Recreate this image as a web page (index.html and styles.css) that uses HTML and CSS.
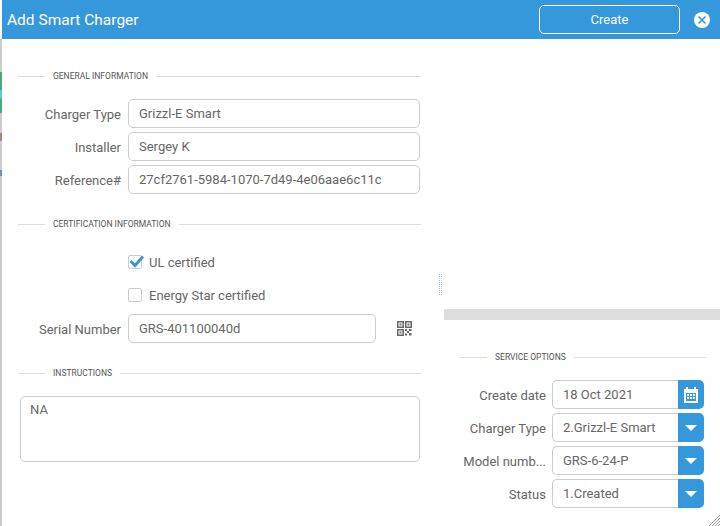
FILE: index.html
```html
<!DOCTYPE html>
<html lang="en">
  <head>
    <meta charset="UTF-8" />
    <meta name="viewport" content="width=device-width, initial-scale=1.0" />
    <title>Add Smart Charger</title>
    <link rel="stylesheet" href="styles.css">
  </head>
  <body>
    <div class="strip"></div>
    <div class="dialog">
      <header class="topbar">
        <span class="topbar-title">Add Smart Charger</span>
        <button class="create-btn">Create</button>
        <span class="close-btn">
          <svg width="10" height="10" viewBox="0 0 10 10"><path d="M1.500 1.500l7 7M8.500 1.500l-7 7" stroke="#3498db" stroke-width="1.600" fill="none"/></svg>
        </span>
      </header>

      <div class="panes">
        <section class="pane-left">
          <div class="group-title general"><span>GENERAL INFORMATION</span></div>
          <div class="rows">
            <div class="row"><label>Charger Type</label><div class="field">Grizzl-E Smart</div></div>
            <div class="row"><label>Installer</label><div class="field">Sergey K</div></div>
            <div class="row"><label>Reference#</label><div class="field">27cf2761-5984-1070-7d49-4e06aae6c11c</div></div>
          </div>

          <div class="group-title cert"><span>CERTIFICATION INFORMATION</span></div>
          <div class="check-row first">
            <span class="check">
              <svg width="18" height="16" viewBox="0 0 18 16"><path d="M2.500 8l4.500 4.500 8-9" stroke="#3498db" stroke-width="3" fill="none"/></svg>
            </span>
            UL certified
          </div>
          <div class="check-row second"><span class="check"></span>Energy Star certified</div>
          <div class="row serial">
            <label>Serial Number</label>
            <div class="field">GRS-401100040d</div>
            <svg class="qr" width="15" height="15" viewBox="0 0 15 15">
              <path d="M.8.8h5.400v5.400h-5.400zM8.800.8h5.400v5.400h-5.400zM.8 8.800h5.400v5.400h-5.400z" fill="none" stroke="#666" stroke-width="1.500"/>
              <path d="M2.500 2.500h2v2h-2zM10.500 2.500h2v2h-2zM2.500 10.500h2v2h-2z" fill="#7d7768"/>
              <path d="M8 8h2v2h-2zM12 8h2.500v2h-2.500zM10 10h2v2h-2zM8 12.500h2v2h-2zM12 12h2.500v2.500h-2.500z" fill="#666"/>
            </svg>
          </div>

          <div class="group-title instr"><span>INSTRUCTIONS</span></div>
          <div class="notes">NA</div>
        </section>

        <div class="splitter"><span class="grip"></span></div>

        <section class="pane-right">
          <div class="blank"></div>
          <div class="hbar"></div>
          <div class="group-title service"><span>SERVICE OPTIONS</span></div>
          <div class="rows small">
            <div class="row">
              <label>Create date</label>
              <div class="field joined">18 Oct 2021</div>
              <span class="addon">
                <svg width="16" height="18" viewBox="0 0 16 18">
                  <path d="M1 3h14v14h-14z" fill="#fff"/>
                  <path d="M3 1h2v3h-2zM11 1h2v3h-2z" fill="#fff"/>
                  <path d="M3 7h10v8h-10z" fill="#3498db"/>
                  <path d="M4 8h2v2h-2zM7 8h2v2h-2zM10 8h2v2h-2zM4 11h2v2h-2zM7 11h2v2h-2zM10 11h2v2h-2z" fill="#fff"/>
                </svg>
              </span>
            </div>
            <div class="row">
              <label>Charger Type</label>
              <div class="field joined">2.Grizzl-E Smart</div>
              <span class="addon"><i class="caret"></i></span>
            </div>
            <div class="row">
              <label>Model numb...</label>
              <div class="field joined">GRS-6-24-P</div>
              <span class="addon"><i class="caret"></i></span>
            </div>
            <div class="row">
              <label>Status</label>
              <div class="field joined">1.Created</div>
              <span class="addon"><i class="caret"></i></span>
            </div>
          </div>
        </section>
      </div>
      <svg class="resize" width="12" height="12" viewBox="0 0 12 12"><path d="M12 1l-11 11M12 4l-8 8M12 7l-5 5M12 10l-2 2" stroke="#999" fill="none"/></svg>
    </div>
  </body>
</html>
```

FILE: styles.css
```css
html, body {
  margin: 0;
  height: 100%;
}

body {
  display: flex;
  height: 526px;
  overflow: hidden;
  font-family: Roboto, "Noto Sans", sans-serif;
  font-size: 13px;
  color: #666;
  background-color: #fff;
}

/* bit of the page behind the dialog */
.strip {
  width: 2px;
  margin-top: 39px;
  background: linear-gradient(
    #ccc 33px,
    #4aa878 33px 51px,
    #5cc8d8 51px 58px,
    #4aa878 61px 74px,
    #ccc 74px 94px,
    #b08478 94px 102px,
    #ccc 102px 131px,
    #6a90b8 131px 137px,
    #ccc 137px
  );
}

.dialog {
  flex: 1;
  display: flex;
  flex-direction: column;
  position: relative;
}

.topbar {
  height: 39px;
  display: flex;
  align-items: center;
  background-color: #3498db;
  color: #fff;
}

.topbar-title {
  flex: 1;
  padding-left: 5px;
  font-size: 15.5px;
}

.create-btn {
  width: 141px;
  height: 29px;
  margin-right: 14px;
  padding: 0;
  border: 1px solid #fff;
  border-radius: 5px;
  background: transparent;
  color: #fff;
  font: inherit;
}

.close-btn {
  width: 16px;
  height: 16px;
  margin-right: 10px;
  display: flex;
  align-items: center;
  justify-content: center;
  border-radius: 50%;
  background-color: #fff;
}

.panes {
  flex: 1;
  display: flex;
}

.pane-left {
  width: 436px;
}

.splitter {
  width: 6px;
  position: relative;
}

.grip {
  position: absolute;
  left: 1px;
  top: 235px;
  width: 1px;
  height: 21px;
  border-left: 1px dotted #b5c8da;
  border-right: 1px dotted #b5c8da;
}

.pane-right {
  flex: 1;
}

.group-title {
  display: flex;
  align-items: center;
  gap: 8px;
  height: 12px;
  font-size: 8.5px;
  color: #555;
}

.group-title::before {
  content: "";
  width: 27px;
  height: 1px;
  background-color: #ddd;
}

.group-title::after {
  content: "";
  flex: 1;
  height: 1px;
  background-color: #ddd;
}

.general {
  margin: 31px 17px 0 16px;
}

.cert {
  margin: 24px 17px 0 16px;
}

.instr {
  margin: 24px 17px 0 16px;
}

.service {
  margin: 31px 14px 0 16px;
}

.rows {
  display: flex;
  flex-direction: column;
  gap: 4px;
  margin-top: 17px;
}

.row {
  display: flex;
  align-items: center;
}

.row label {
  width: 119px;
  margin-right: 7px;
  padding-top: 1px;
  text-align: right;
}

.field {
  flex: 0 0 auto;
  width: 280px;
  height: 27px;
  padding-left: 10px;
  line-height: 27px;
  border: 1px solid #ccc;
  border-radius: 5px;
  white-space: nowrap;
}

.check-row {
  display: flex;
  align-items: center;
  gap: 7px;
  height: 16px;
  margin-left: 126px;
}

.check-row.first {
  margin-top: 24px;
}

.check-row.second {
  margin-top: 17px;
}

.check {
  width: 12px;
  height: 12px;
  border: 1px solid #ccc;
  border-radius: 2px;
  position: relative;
}

.check svg {
  position: absolute;
  left: -1px;
  top: -3px;
}

.serial {
  margin-top: 11px;
}

.serial .field {
  width: 236px;
}

.qr {
  margin-left: 21px;
}

.notes {
  width: 389px;
  height: 54px;
  margin: 17px 0 0 18px;
  padding: 5px 0 5px 9px;
  border: 1px solid #ccc;
  border-radius: 5px;
}

.blank {
  height: 270px;
}

.hbar {
  height: 11px;
  background-color: #ddd;
}

.small .row label {
  width: 102px;
  margin-right: 6px;
}

.small .field.joined {
  width: 115px;
  border-right: none;
  border-radius: 5px 0 0 5px;
}

.addon {
  width: 26px;
  height: 29px;
  display: flex;
  align-items: center;
  justify-content: center;
  background-color: #3498db;
  border-radius: 0 5px 5px 0;
}

.caret {
  width: 0;
  height: 0;
  border-left: 6px solid transparent;
  border-right: 6px solid transparent;
  border-top: 6px solid #fff;
}

.resize {
  position: absolute;
  right: 0;
  bottom: 0;
}
```
